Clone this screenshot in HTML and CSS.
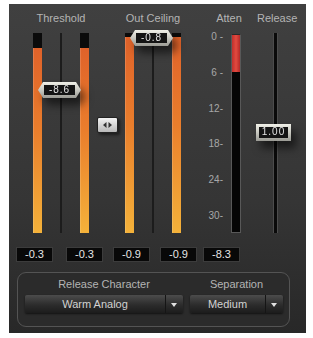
FILE: index.html
```html
<!DOCTYPE html>
<html lang="en">
<head>
    <meta charset="UTF-8">
    <title>Limiter</title>
    <link rel="stylesheet" href="styles.css">
</head>
<body>
    <div class="panel">
        <div class="meters">
            <div class="col threshold">
                <div class="label">Threshold</div>
                <div class="tracks">
                    <div class="bar"><div class="fill" style="height: 185px"></div></div>
                    <div class="line"></div>
                    <div class="bar"><div class="fill" style="height: 185px"></div></div>
                    <div class="handle arrows" style="top: 49px"><div class="face"><span>-8.6</span></div></div>
                </div>
            </div>
            <div class="col link">
                <div class="label"></div>
                <div class="tracks">
                    <button class="link-btn">
                        <svg width="9" height="6" viewBox="0 0 9 6"><path d="M0 3 L3.5 0 V6 Z M9 3 L5.5 0 V6 Z" fill="#333"/></svg>
                    </button>
                </div>
            </div>
            <div class="col ceiling">
                <div class="label">Out Ceiling</div>
                <div class="tracks">
                    <div class="bar"><div class="fill" style="height: 196px"></div></div>
                    <div class="line"></div>
                    <div class="bar"><div class="fill" style="height: 196px"></div></div>
                    <div class="handle arrows" style="top: -3px"><div class="face"><span>-0.8</span></div></div>
                </div>
            </div>
            <div class="col atten">
                <div class="label">Atten</div>
                <div class="tracks">
                    <div class="scale">
                        <span>0 -</span>
                        <span>6 -</span>
                        <span>12-</span>
                        <span>18-</span>
                        <span>24-</span>
                        <span>30-</span>
                    </div>
                    <div class="gr-meter"><div class="gr-fill" style="height: 37px"></div></div>
                </div>
            </div>
            <div class="col release">
                <div class="label">Release</div>
                <div class="tracks">
                    <div class="rail"></div>
                    <div class="handle plain" style="top: 91px"><div class="face"><span>1.00</span></div></div>
                </div>
            </div>
        </div>

        <div class="readouts">
            <div class="readout">-0.3</div>
            <div class="readout">-0.3</div>
            <div class="readout">-0.9</div>
            <div class="readout">-0.9</div>
            <div class="readout">-8.3</div>
        </div>

        <div class="options">
            <div class="option">
                <div class="opt-label">Release Character</div>
                <div class="dropdown">
                    <span class="dd-text">Warm Analog</span>
                    <span class="dd-arrow"></span>
                </div>
            </div>
            <div class="option">
                <div class="opt-label">Separation</div>
                <div class="dropdown">
                    <span class="dd-text">Medium</span>
                    <span class="dd-arrow"></span>
                </div>
            </div>
        </div>
    </div>
</body>
</html>
```

FILE: styles.css
```css
body {
    margin: 0;
    background-color: #ffffff;
    font-family: "Liberation Sans", Arial, sans-serif;
}
.panel {
    width: 297px;
    height: 329px;
    margin: 4px 0 0 9px;
    padding-top: 8px;
    box-sizing: border-box;
    background: linear-gradient(#404040, #353535 60%, #282828);
}
.meters {
    display: flex;
    padding-left: 22px;
}
.col {
    display: flex;
    flex-direction: column;
}
.label {
    height: 12px;
    line-height: 12px;
    font-size: 11px;
    color: #b4b4b4;
    text-align: center;
    white-space: nowrap;
}
.tracks {
    position: relative;
    height: 200px;
    margin-top: 9px;
}
.threshold, .ceiling {
    width: 60px;
}
.threshold .tracks, .ceiling .tracks {
    display: flex;
    justify-content: space-between;
    padding: 0 2px;
}
.link { width: 32px; }
.atten { width: 56px; margin-left: 18px; }
.release { width: 36px; }

.bar {
    width: 9px;
    height: 200px;
    background-color: #0b0b0b;
    display: flex;
    flex-direction: column;
    justify-content: flex-end;
}
.fill {
    background: linear-gradient(#e0622a, #ea7e2c 45%, #f4b23a);
    box-shadow: inset 1px 0 0 rgba(255, 255, 255, 0.15);
}
.line {
    width: 2px;
    background-color: #1c1c1c;
}

/* fader handles */
.handle {
    position: absolute;
    filter: drop-shadow(5px 7px 4px rgba(0, 0, 0, 0.55));
}
.arrows {
    left: 7px;
    width: 43px;
    height: 16px;
}
.plain {
    left: -1px;
    width: 35px;
    height: 17px;
}
.face {
    height: 100%;
    box-sizing: border-box;
    background: linear-gradient(#f0f0e8, #c8c8c0 50%, #9a9a94);
    display: flex;
    align-items: center;
    justify-content: center;
}
.arrows .face {
    clip-path: polygon(0 50%, 5px 0, calc(100% - 5px) 0, 100% 50%, calc(100% - 5px) 100%, 5px 100%);
    padding: 3px 6px;
}
.plain .face {
    padding: 3px;
}
.face span {
    flex: 1;
    height: 100%;
    background-color: #141414;
    color: #e4e4e4;
    font-size: 10px;
    line-height: 10px;
    letter-spacing: 1px;
    text-align: center;
}

.link-btn {
    display: block;
    width: 21px;
    height: 16px;
    margin: 84px 0 0 6px;
    padding: 0;
    border: 1px solid #222;
    border-radius: 2px;
    background: linear-gradient(#f2f2f2, #b8b8b8);
    box-shadow: 2px 2px 3px rgba(0, 0, 0, 0.5);
}
.link-btn svg { display: block; margin: 0 auto; }

.atten .tracks {
    display: flex;
}
.scale {
    width: 22px;
    margin-top: -2px;
    display: flex;
    flex-direction: column;
    gap: 23.8px;
    text-align: right;
}
.scale span {
    height: 12px;
    line-height: 12px;
    font-size: 10px;
    color: #a8a8a8;
}
.gr-meter {
    width: 10px;
    height: 199px;
    margin: 1px 0 0 8px;
    box-sizing: border-box;
    border: 1px solid #585858;
    border-top-color: #2a2a2a;
    background-color: #050505;
}
.gr-fill {
    background: linear-gradient(90deg, #c0302c, #e24a40 50%, #b42a28);
}
.rail {
    width: 3px;
    height: 200px;
    margin: 0 auto;
    background-color: #0a0a0a;
    border-left: 1px solid #4c4c4c;
    border-right: 1px solid #4c4c4c;
}

.readouts {
    display: flex;
    padding-left: 7px;
    margin-top: 14px;
}
.readout {
    width: 37px;
    height: 15px;
    box-sizing: border-box;
    margin-right: 10px;
    background-color: #080808;
    border: 1px solid #3c3c3c;
    color: #e6e6e6;
    font-size: 11px;
    line-height: 13px;
    text-align: center;
}
.readout:first-child { margin-right: 13px; }
.readout:nth-child(4) { margin-right: 6px; }

.options {
    display: grid;
    grid-template-columns: 158px 93px;
    column-gap: 7px;
    width: 273px;
    height: 55px;
    margin: 10px 0 0 8px;
    padding: 5px 7px 0;
    box-sizing: border-box;
    border: 1px solid #545454;
    border-radius: 9px;
    background-color: #2b2b2b;
}
.opt-label {
    height: 13px;
    line-height: 13px;
    font-size: 11px;
    color: #b4b4b4;
    text-align: center;
    margin-bottom: 4px;
}
.dropdown {
    display: flex;
    height: 18px;
    border-radius: 2px;
    background: linear-gradient(#4c4c4c, #2c2c2c 55%, #1c1c1c);
    box-shadow: 0 1px 2px rgba(0, 0, 0, 0.6);
}
.dd-text {
    flex: 1;
    text-align: center;
    line-height: 18px;
    font-size: 11px;
    color: #d2d2d2;
}
.dd-arrow {
    width: 17px;
    border-left: 1px solid #151515;
    position: relative;
}
.dd-arrow::after {
    content: "";
    position: absolute;
    left: 5px;
    top: 8px;
    border-left: 3px solid transparent;
    border-right: 3px solid transparent;
    border-top: 4px solid #e0e0e0;
}
```
